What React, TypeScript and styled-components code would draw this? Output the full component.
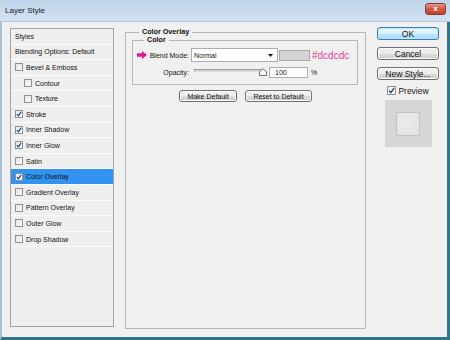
import React from 'react';
import styled, { createGlobalStyle } from 'styled-components';

const Global = createGlobalStyle`
  html, body { margin: 0; padding: 0; background: #f0f0f0; }
  body { font-family: "Liberation Sans", Arial, sans-serif; color: #141414; }
  * { box-sizing: border-box; }
`;

const Window = styled.div`
  width: 450px;
  height: 340px;
  display: flex;
  flex-direction: column;
  overflow: hidden;
  background: #f0f0f0;
`;

const TitleBar = styled.div`
  height: 22px;
  flex: none;
  display: flex;
  align-items: center;
  justify-content: space-between;
  padding: 0 4px 0 5px;
  background: linear-gradient(#bfd4ea, #d2e2f2);
  border-bottom: 1px solid #b3c7da;
`;

const Title = styled.span`
  font-size: 8px;
  color: #1b1b1b;
`;

const CloseButton = styled.div`
  align-self: flex-start;
  margin-top: 3px;
  width: 21px;
  height: 12px;
  border: 1px solid #8b3a30;
  border-radius: 3px;
  background: linear-gradient(#e49a8c, #cf5a47 50%, #c0402c);
  display: flex;
  align-items: center;
  justify-content: center;
  color: #fff;
  font-size: 8px;
  font-weight: bold;
  line-height: 1;
`;

const Frame = styled.div`
  flex: 1;
  display: flex;
  align-items: flex-start;
  padding: 6px 0 0 8px;
  border-left: 2px solid #a9c1d7;
  border-right: 3px solid #2d7587;
  border-bottom: 3px solid #2d7587;
`;

const StylesList = styled.div`
  width: 104px;
  height: 299px;
  flex: none;
  border: 1px solid #a4a4a4;
  background: #efefef;
  display: flex;
  flex-direction: column;
`;

const Row = styled.div<{ $indent: number; $selected?: boolean }>`
  height: 15.6px;
  flex: none;
  display: flex;
  align-items: center;
  gap: 3px;
  padding-left: ${p => p.$indent}px;
  border-bottom: 1px solid #fbfbfb;
  font-size: 7px;
  color: #111;
  background: ${p => (p.$selected ? '#3393f0' : 'transparent')};
  white-space: nowrap;
`;

const Box = styled.span<{ $size: number }>`
  width: ${p => p.$size}px;
  height: ${p => p.$size}px;
  flex: none;
  border: 1px solid #8f9090;
  background: linear-gradient(135deg, #e6e6e6, #fbfbfb);
  display: flex;
  align-items: center;
  justify-content: center;
`;

const Check = ({ checked, size = 8 }: { checked: boolean; size?: number }) => (
  <Box $size={size}>
    {checked && (
      <svg width={size - 2} height={size - 2} viewBox="0 0 8 8">
        <path d="M1.2 4.2 L3.2 6.4 L6.9 1.2" stroke="#1f3f7c" strokeWidth="1.5" fill="none" />
      </svg>
    )}
  </Box>
);

const Fieldset = styled.fieldset<{ $outer?: boolean }>`
  margin: ${p => (p.$outer ? '0 0 0 11px' : '0 7px 0 6px')};
  padding: ${p => (p.$outer ? '0' : '4px 0 6px 0')};
  min-width: 0;
  width: ${p => (p.$outer ? '241px' : 'auto')};
  height: ${p => (p.$outer ? '301px' : 'auto')};
  flex: none;
  border: 1px solid #b7b7b7;
  display: flex;
  flex-direction: column;
`;

const Legend = styled.legend<{ $offset: number }>`
  margin-left: ${p => p.$offset}px;
  padding: 0 3px;
  font-size: 7.2px;
  line-height: 8px;
  font-weight: bold;
  color: #111;
`;

const FieldRow = styled.div<{ $top: number; $height: number }>`
  display: flex;
  align-items: center;
  height: ${p => p.$height}px;
  margin-top: ${p => p.$top}px;
  font-size: 7px;
`;

const LabelCell = styled.div`
  width: 56px;
  flex: none;
  display: flex;
  justify-content: flex-end;
  align-items: center;
  gap: 3px;
  white-space: nowrap;
`;

const Select = styled.div`
  width: 87px;
  height: 14px;
  margin-left: 2px;
  background: #fff;
  border: 1px solid #abadb3;
  display: flex;
  align-items: center;
  justify-content: space-between;
  padding: 0 4px 0 2px;
`;

const Swatch = styled.div`
  width: 31px;
  height: 11px;
  margin-left: 1px;
  background: #d4d4d4;
  border: 1px solid #a9a9a9;
`;

const Hex = styled.span`
  margin-left: 2px;
  font-size: 10px;
  color: #e4409a;
`;

const Slider = styled.div`
  position: relative;
  width: 74px;
  height: 11px;
  margin-left: 5px;
  align-self: flex-start;
`;

const Track = styled.div`
  margin-top: 2px;
  width: 70px;
  height: 3px;
  border: 1px solid #9c9c9c;
  border-bottom-color: #dcdcdc;
  background: #cfcfcf;
`;

const Thumb = styled.svg`
  position: absolute;
  left: 65px;
  top: 1px;
`;

const NumInput = styled.div`
  width: 39px;
  height: 11px;
  margin-left: 1px;
  background: #fff;
  border: 1px solid #abadb3;
  display: flex;
  align-items: center;
  padding-left: 5px;
`;

const Percent = styled.span`
  margin-left: 3px;
`;

const ButtonRow = styled.div`
  display: flex;
  justify-content: center;
  gap: 8px;
  margin-top: 5px;
`;

const Button = styled.div<{ $w: string; $h: number; $primary?: boolean; $size?: number }>`
  width: ${p => p.$w};
  height: ${p => p.$h}px;
  flex: none;
  border: 1px solid ${p => (p.$primary ? '#3c7fb1' : '#707070')};
  border-radius: 3px;
  background: ${p =>
    p.$primary
      ? 'linear-gradient(#eaf6fd, #d9f0fc 50%, #bee6fd 51%, #a7d9f5)'
      : 'linear-gradient(#f2f2f2, #ebebeb 50%, #dddddd 51%, #cfcfcf)'};
  box-shadow: inset 0 0 0 1px ${p => (p.$primary ? '#bfe7fb' : '#fbfbfb')};
  display: flex;
  align-items: center;
  justify-content: center;
  font-size: ${p => p.$size ?? 7}px;
  color: #111;
  white-space: nowrap;
`;

const Side = styled.div`
  width: 62px;
  flex: none;
  margin-left: 11px;
  margin-top: -1px;
  display: flex;
  flex-direction: column;
  align-items: stretch;
`;

const SideGap = styled.div<{ $h: number }>`
  height: ${p => p.$h}px;
  flex: none;
`;

const PreviewRow = styled.div`
  height: 9px;
  display: flex;
  align-items: center;
  justify-content: center;
  gap: 2px;
  font-size: 8.5px;
`;

const PreviewBox = styled.div`
  width: 47px;
  height: 47px;
  align-self: center;
  background: #d6d6d6;
  display: flex;
  align-items: center;
  justify-content: center;
`;

const PreviewInner = styled.div`
  width: 24px;
  height: 24px;
  border: 1px solid #c3c3c3;
  background: radial-gradient(circle at 40% 40%, #ececec, #e0e0e0);
`;

const items: { label: string; indent: number; check?: boolean; checked?: boolean; selected?: boolean }[] = [
  { label: 'Styles', indent: 4 },
  { label: 'Blending Options: Default', indent: 4 },
  { label: 'Bevel & Emboss', indent: 4, check: true },
  { label: 'Contour', indent: 13, check: true },
  { label: 'Texture', indent: 13, check: true },
  { label: 'Stroke', indent: 4, check: true, checked: true },
  { label: 'Inner Shadow', indent: 4, check: true, checked: true },
  { label: 'Inner Glow', indent: 4, check: true, checked: true },
  { label: 'Satin', indent: 4, check: true },
  { label: 'Color Overlay', indent: 4, check: true, checked: true, selected: true },
  { label: 'Gradient Overlay', indent: 4, check: true },
  { label: 'Pattern Overlay', indent: 4, check: true },
  { label: 'Outer Glow', indent: 4, check: true },
  { label: 'Drop Shadow', indent: 4, check: true },
];

export default function App() {
  return (
    <>
      <Global />
      <Window>
        <TitleBar>
          <Title>Layer Style</Title>
          <CloseButton>x</CloseButton>
        </TitleBar>
        <Frame>
          <StylesList>
            {items.map(it => (
              <Row key={it.label} $indent={it.indent} $selected={it.selected}>
                {it.check && <Check checked={!!it.checked} />}
                <span>{it.label}</span>
              </Row>
            ))}
          </StylesList>

          <Fieldset $outer>
            <Legend $offset={13}>Color Overlay</Legend>
            <Fieldset>
              <Legend $offset={11}>Color</Legend>
              <FieldRow $top={0} $height={14}>
                <LabelCell>
                  <svg width="10" height="8" viewBox="0 0 10 8">
                    <path d="M0 2.3 H5 V0 L10 4 L5 8 V5.7 H0 Z" fill="#e5178c" />
                  </svg>
                  <span>Blend Mode:</span>
                </LabelCell>
                <Select>
                  <span>Normal</span>
                  <svg width="5" height="3" viewBox="0 0 5 3">
                    <path d="M0 0 H5 L2.5 3 Z" fill="#111" />
                  </svg>
                </Select>
                <Swatch />
                <Hex>#dcdcdc</Hex>
              </FieldRow>
              <FieldRow $top={5} $height={11}>
                <LabelCell>
                  <span>Opacity:</span>
                </LabelCell>
                <Slider>
                  <Track />
                  <Thumb width="8" height="8" viewBox="0 0 8 8">
                    <path d="M4 0.5 L7.5 4 V7.5 H0.5 V4 Z" fill="#f8f8f8" stroke="#6e6e6e" strokeWidth="1" />
                  </Thumb>
                </Slider>
                <NumInput>100</NumInput>
                <Percent>%</Percent>
              </FieldRow>
            </Fieldset>
            <ButtonRow>
              <Button $w="58px" $h={12}>Make Default</Button>
              <Button $w="67px" $h={12}>Reset to Default</Button>
            </ButtonRow>
          </Fieldset>

          <Side>
            <Button $w="auto" $h={13} $primary $size={8.5}>OK</Button>
            <SideGap $h={7} />
            <Button $w="auto" $h={13} $size={8.5}>Cancel</Button>
            <SideGap $h={7} />
            <Button $w="auto" $h={13} $size={8.5}>New Style...</Button>
            <SideGap $h={6} />
            <PreviewRow>
              <Check checked size={9} />
              <span>Preview</span>
            </PreviewRow>
            <SideGap $h={5} />
            <PreviewBox>
              <PreviewInner />
            </PreviewBox>
          </Side>
        </Frame>
      </Window>
    </>
  );
}
